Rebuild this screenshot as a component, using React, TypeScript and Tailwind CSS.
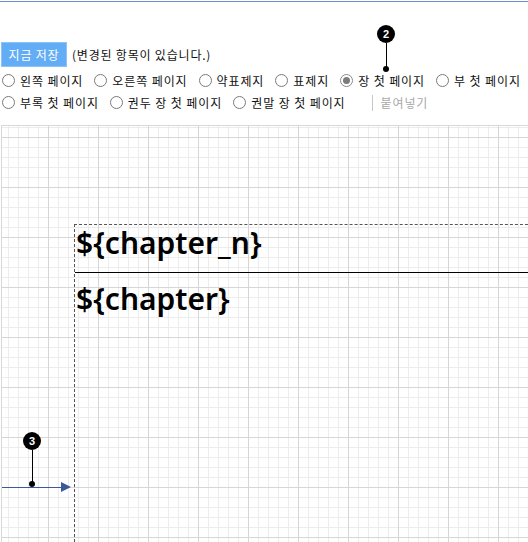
import React from "react";

const font = { fontFamily: '"Noto Sans CJK KR", "Noto Sans", sans-serif' };

function Radio({ label, checked }: { label: string; checked?: boolean }) {
  return (
    <label className="flex items-center mr-[11px] shrink-0 whitespace-nowrap">
      <span
        className={
          "w-[13px] h-[13px] shrink-0 rounded-full border bg-white flex items-center justify-center " +
          (checked ? "border-[#8a8a8a]" : "border-[#7a7a7a]")
        }
      >
        {checked ? <span className="w-[7px] h-[7px] rounded-full bg-[#7c7c7c]" /> : null}
      </span>
      <span className="ml-[5px] text-[12px] tracking-[0.9px] text-[#111] leading-[16px] whitespace-nowrap">{label}</span>
    </label>
  );
}

function Callout({ n, className }: { n: string; className: string }) {
  return (
    <div className={"absolute flex flex-col items-center " + className}>
      <div className="w-[18px] h-[18px] rounded-full bg-black text-white text-[11px] font-bold flex items-center justify-center leading-none font-['Liberation_Sans',sans-serif]">
        {n}
      </div>
      <div className="w-px bg-black flex-1" />
      <div className="w-[6px] h-[6px] rounded-full bg-black -mt-[3px]" />
    </div>
  );
}

export default function App() {
  return (
    <div className="relative w-[528px] h-[542px] bg-white overflow-hidden flex flex-col" style={font}>
      <div className="h-px bg-[#6f8fd4] mt-px shrink-0" />
      <div className="h-[40px] shrink-0" />
      <div className="flex items-center h-[25px] shrink-0">
        <button className="ml-px h-[25px] w-[66px] bg-[#63adf6] border border-[#8cc4f8] text-white text-[12px] tracking-[0.8px] leading-none flex items-center justify-center whitespace-nowrap">
          지금 저장
        </button>
        <span className="ml-[5px] text-[12px] tracking-[0.8px] text-[#111] whitespace-nowrap">(변경된 항목이 있습니다.)</span>
      </div>
      <div className="flex items-center h-[24px] pl-[2px] shrink-0 pt-[3px] overflow-hidden">
        <Radio label="왼쪽 페이지" />
        <Radio label="오른쪽 페이지" />
        <Radio label="약표제지" />
        <Radio label="표제지" />
        <Radio label="장 첫 페이지" checked />
        <Radio label="부 첫 페이지" />
      </div>
      <div className="flex items-center h-[23px] pl-[2px] shrink-0 overflow-hidden">
        <Radio label="부록 첫 페이지" />
        <Radio label="권두 장 첫 페이지" />
        <Radio label="권말 장 첫 페이지" />
        <span className="ml-[15px] w-px h-[16px] bg-[#c8c8c8] shrink-0" />
        <span className="ml-[8px] text-[12px] tracking-[0.9px] text-[#a8a8a8] whitespace-nowrap">붙여넣기</span>
      </div>
      <div className="h-[11px] shrink-0" />
      <div className="relative flex-1 ml-px border-t border-l border-[#d8d8d8] bg-white bg-[linear-gradient(to_right,#d6d6d6_1px,transparent_1px),linear-gradient(to_bottom,#d6d6d6_1px,transparent_1px),linear-gradient(to_right,#ececec_1px,transparent_1px),linear-gradient(to_bottom,#ececec_1px,transparent_1px)] [background-size:50px_50px,50px_50px,10px_10px,10px_10px] [background-position:46px_11px,46px_11px,6px_1px,6px_1px]">
        <div className="absolute left-[72px] top-[98px] -right-[20px] -bottom-[20px] border border-dashed border-[#555] flex flex-col">
          <div className="h-[48px] border-b border-black text-[30px] font-semibold leading-[36px] text-black pl-px" style={{ fontFamily: '"Noto Sans", sans-serif' }}>
            {"${chapter_n}"}
          </div>
          <div className="text-[30px] font-semibold leading-[52px] text-black pl-px" style={{ fontFamily: '"Noto Sans", sans-serif' }}>
            {"${chapter}"}
          </div>
        </div>
        <div className="absolute left-0 top-[356px] flex items-center">
          <div className="w-[59px] h-px bg-[#3d5a98]" />
          <div className="w-0 h-0 border-y-[5px] border-y-transparent border-l-[10px] border-l-[#3d5a98]" />
        </div>
      </div>
      <Callout n="2" className="left-[377px] top-[25px] h-[47px] w-[18px]" />
      <Callout n="3" className="left-[23px] top-[432px] h-[55px] w-[18px]" />
    </div>
  );
}
